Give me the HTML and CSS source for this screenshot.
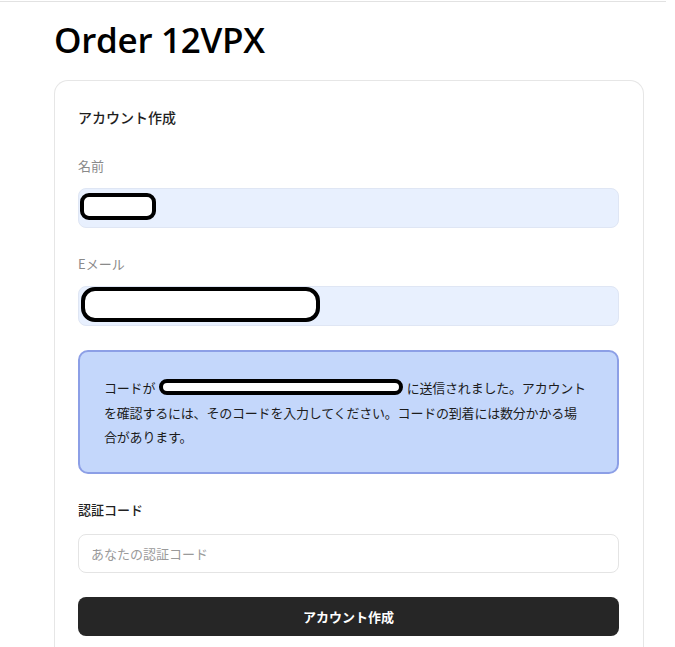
FILE: index.html
```html
<!DOCTYPE html>
<html lang="ja">
<head>
  <meta charset="UTF-8">
  <title>Order 12VPX</title>
  <link rel="stylesheet" href="styles.css">
</head>
<body>
  <div class="topbar"></div>
  <div class="page">
    <h1 class="title">Order 12VPX</h1>
    <div class="card">
      <div class="cardTitle">アカウント作成</div>

      <label class="label">名前</label>
      <div class="field filled">
        <span class="scribble name"></span>
      </div>

      <label class="label">Eメール</label>
      <div class="field filled">
        <span class="scribble mail"></span>
      </div>

      <div class="notice">
        コードが <span class="scribble inline"></span> に送信されました。アカウントを確認するには、そのコードを入力してください。コードの到着には数分かかる場合があります。
      </div>

      <label class="label strong">認証コード</label>
      <input class="field code" type="text" placeholder="あなたの認証コード">

      <button class="submit">アカウント作成</button>
    </div>
  </div>
</body>
</html>
```

FILE: styles.css
```css
body {
  margin: 0;
  font-family: "Noto Sans CJK JP", "Noto Sans", sans-serif;
  color: #222;
  background: #fff;
}
.topbar {
  width: 666px;
  height: 1px;
  margin-top: 1px;
  background: #e2e2e2;
}
.page {
  padding-left: 54px;
  width: 590px;
}
.title {
  margin: 13px 0 0 0;
  font-family: "Open Sans", sans-serif;
  font-weight: 600;
  font-size: 35px;
  line-height: 50px;
  color: #000;
  letter-spacing: -0.3px;
}
.card {
  margin-top: 15px;
  border: 1px solid #e6e6e6;
  border-bottom: none;
  border-radius: 14px 14px 0 0;
  padding: 26px 24px 20px 23px;
  height: 540px;
}
.cardTitle {
  font-size: 14px;
  font-weight: 500;
  line-height: 20px;
  color: #1e1e1e;
}
.label {
  display: block;
  margin-top: 29px;
  font-size: 13px;
  line-height: 20px;
  color: #8a8a8a;
}
.field + .label {
  margin-top: 26px;
}
.label.strong {
  color: #222;
  font-weight: 500;
  margin-top: 26px;
}
.field {
  position: relative;
  box-sizing: border-box;
  display: block;
  width: 541px;
  height: 40px;
  margin-top: 12px;
  border: 1px solid #e4e4e4;
  border-radius: 8px;
  background: #fff;
}
.field.filled {
  background: #e8f0fe;
  border-color: #dfe6f4;
}
.field.code {
  height: 39px;
  margin-top: 14px;
  padding: 0 12px;
  font-family: inherit;
  font-size: 13px;
  color: #333;
  outline: none;
}
.field.code::placeholder {
  color: #9a9a9a;
}
.scribble {
  box-sizing: border-box;
  display: inline-block;
  border: 4px solid #000;
  border-radius: 9px;
  background: #fff;
}
.scribble.name {
  position: absolute;
  left: 1px;
  top: 4px;
  width: 76px;
  height: 27px;
}
.scribble.mail {
  position: absolute;
  left: 2px;
  top: 0px;
  width: 239px;
  height: 35px;
  border-radius: 14px;
}
.scribble.inline {
  width: 244px;
  height: 16px;
  border-radius: 8px;
  vertical-align: -2px;
  margin: 0 1px;
}
.notice {
  box-sizing: border-box;
  width: 541px;
  margin-top: 24px;
  padding: 24px 28px 22px 24px;
  border: 2px solid #8c9fe6;
  border-radius: 10px;
  background: #c4d7fb;
  font-size: 13px;
  letter-spacing: -0.2px;
  line-height: 24.5px;
  color: #1c1c1c;
}
.submit {
  display: block;
  width: 541px;
  height: 39px;
  margin-top: 24px;
  border: none;
  border-radius: 8px;
  background: #262626;
  color: #fff;
  font-family: inherit;
  font-size: 13px;
  font-weight: 700;
}
```
